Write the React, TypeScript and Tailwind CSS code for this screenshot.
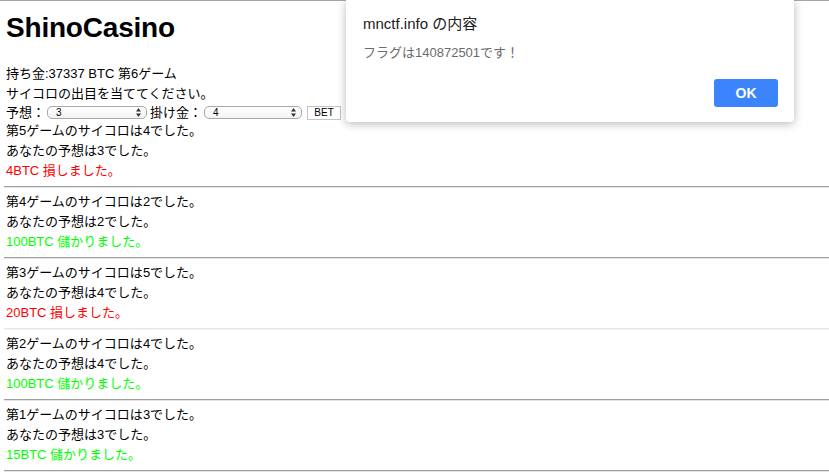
const games = [
  { no: 5, dice: 4, guess: 3, amount: 4, win: false, light: false },
  { no: 4, dice: 2, guess: 2, amount: 100, win: true, light: false },
  { no: 3, dice: 5, guess: 4, amount: 20, win: false, light: true },
  { no: 2, dice: 4, guess: 4, amount: 100, win: true, light: false },
  { no: 1, dice: 3, guess: 3, amount: 15, win: true, light: false },
];

function UpDown() {
  return (
    <svg width="5" height="9" viewBox="0 0 5 9" className="shrink-0">
      <path d="M2.5 0 L5 3.5 L0 3.5 Z" fill="#333" />
      <path d="M2.5 9 L5 5.5 L0 5.5 Z" fill="#333" />
    </svg>
  );
}

function FakeSelect({ value, width }: { value: string; width: string }) {
  return (
    <div
      className={`${width} h-[13px] flex items-center justify-between rounded-[5px] border border-[#a8a8a8] bg-gradient-to-b from-white to-[#f3f3f3] pl-[8px] pr-[5px] text-[10px] leading-none`}
    >
      <span>{value}</span>
      <UpDown />
    </div>
  );
}

export default function App() {
  return (
    <div className="relative w-[829px] h-[473px] overflow-hidden bg-white text-black font-['Liberation_Sans','Noto_Sans_CJK_JP',sans-serif]">
      {/* browser chrome edge */}
      <div className="h-px bg-[#a6a6a6]" />

      <div className="pl-[6px]">
        <h1 className="mt-[11px] text-[28px] leading-[31px] font-bold tracking-[-0.2px]">ShinoCasino</h1>

        <div className="mt-[21px] text-[13px] leading-[20px]">
          <p>持ち金:37337 BTC 第6ゲーム</p>
          <p>サイコロの出目を当ててください。</p>
          <div className="flex items-center h-[17px]">
            <span>予想：</span>
            <div className="ml-[2px]">
              <FakeSelect value="3" width="w-[100px]" />
            </div>
            <span className="ml-[3px]">掛け金：</span>
            <div className="ml-[2px]">
              <FakeSelect value="4" width="w-[98px]" />
            </div>
            <button className="ml-[5px] h-[14px] w-[34px] border border-[#c4c4c4] bg-white text-[10px] leading-none flex items-center justify-center">
              BET
            </button>
          </div>
        </div>
      </div>

      {/* results */}
      {games.map((g) => (
        <div key={g.no}>
          <div className="pl-[6px] text-[13px] leading-[20px]">
            <p>第{g.no}ゲームのサイコロは{g.dice}でした。</p>
            <p>あなたの予想は{g.guess}でした。</p>
            <p className={g.win ? 'text-[#00ff00]' : 'text-[#ff0000]'}>
              {g.amount}BTC {g.win ? '儲かりました。' : '損しました。'}
            </p>
          </div>
          <div className="mt-[5px] mb-[4px] ml-[4px]">
            <div className={g.light ? 'h-px bg-[#e6e6e6]' : 'h-px bg-[#9f9f9f]'} />
            <div className={g.light ? 'h-px bg-[#f4f4f4]' : 'h-px bg-[#e4e4e4]'} />
          </div>
        </div>
      ))}

      {/* alert dialog */}
      <div className="absolute left-[346px] top-0 w-[448px] h-[122px] bg-white rounded-b-[4px] shadow-[0_2px_10px_rgba(0,0,0,0.28)] pl-[17px] pr-[16px]">
        <p className="mt-[14px] text-[15px] leading-[20px] text-[#202020]">mnctf.info の内容</p>
        <p className="mt-[10px] text-[13px] leading-[18px] text-[#6b6b6b]">フラグは140872501です！</p>
        <div className="mt-[17px] flex justify-end">
          <button className="w-[64px] h-[28px] rounded-[3px] bg-[#3c84fb] text-white text-[14px] font-bold flex items-center justify-center">
            OK
          </button>
        </div>
      </div>
    </div>
  );
}
